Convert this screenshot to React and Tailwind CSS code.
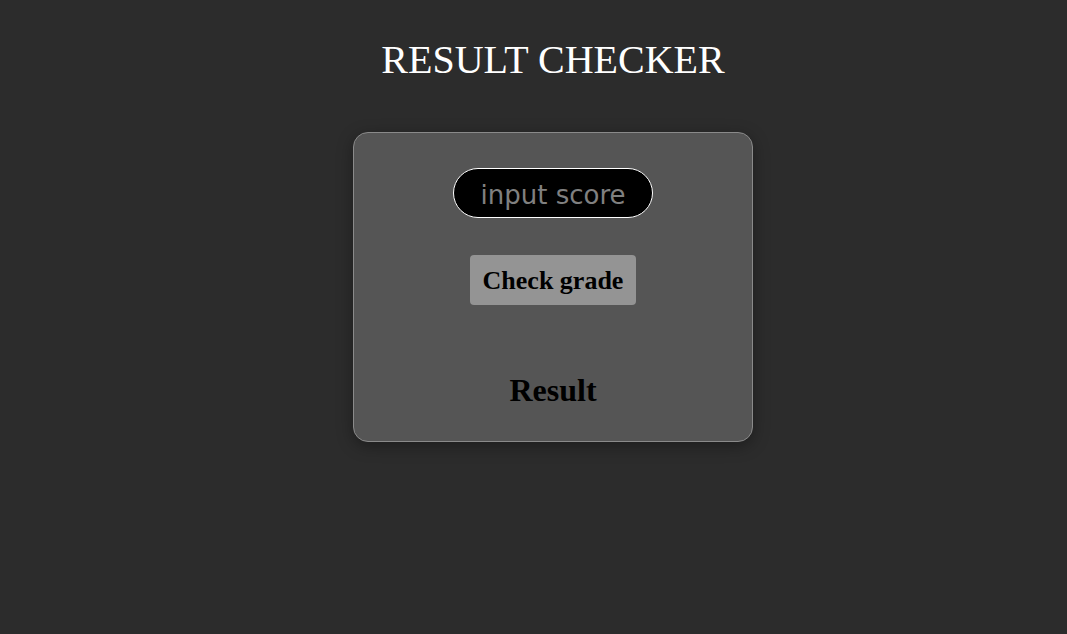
import React, { useState } from 'react';

export default function App() {
  const [score, setScore] = useState('');
  const [result, setResult] = useState('Result');

  const checkGrade = () => {
    const n = Number(score);
    if (score === '' || isNaN(n)) return setResult('Result');
    if (n >= 70) setResult('A');
    else if (n >= 60) setResult('B');
    else if (n >= 50) setResult('C');
    else if (n >= 45) setResult('D');
    else setResult('F');
  };

  return (
    <div className="min-h-screen w-full bg-[#2c2c2c] pl-[39px] flex flex-col items-center font-['Liberation_Serif',serif]">
      {/* Title */}
      <h1 className="mt-[36px] text-[40px] leading-[48px] text-white">RESULT CHECKER</h1>

      {/* Card */}
      <div className="mt-[48px] w-[400px] h-[310px] bg-[#555555] border border-[#8a8a8a] rounded-[15px] shadow-[0_4px_16px_rgba(0,0,0,0.35)] flex flex-col items-center">
        <input
          type="text"
          value={score}
          onChange={(e) => setScore(e.target.value)}
          placeholder="input score"
          className="mt-[35px] w-[200px] h-[50px] pt-[3px] rounded-full bg-black border border-white text-center text-[26px] text-white placeholder:text-[#808080] outline-none font-['Comic_Sans_MS','DejaVu_Sans',sans-serif]"
        />

        <button
          onClick={checkGrade}
          className="mt-[37px] w-[166px] h-[50px] bg-[#949494] rounded-[4px] text-[26px] font-bold text-black"
        >
          Check grade
        </button>

        <h2 className="mt-[65px] text-[32px] font-bold text-black leading-[40px]">{result}</h2>
      </div>
    </div>
  );
}
